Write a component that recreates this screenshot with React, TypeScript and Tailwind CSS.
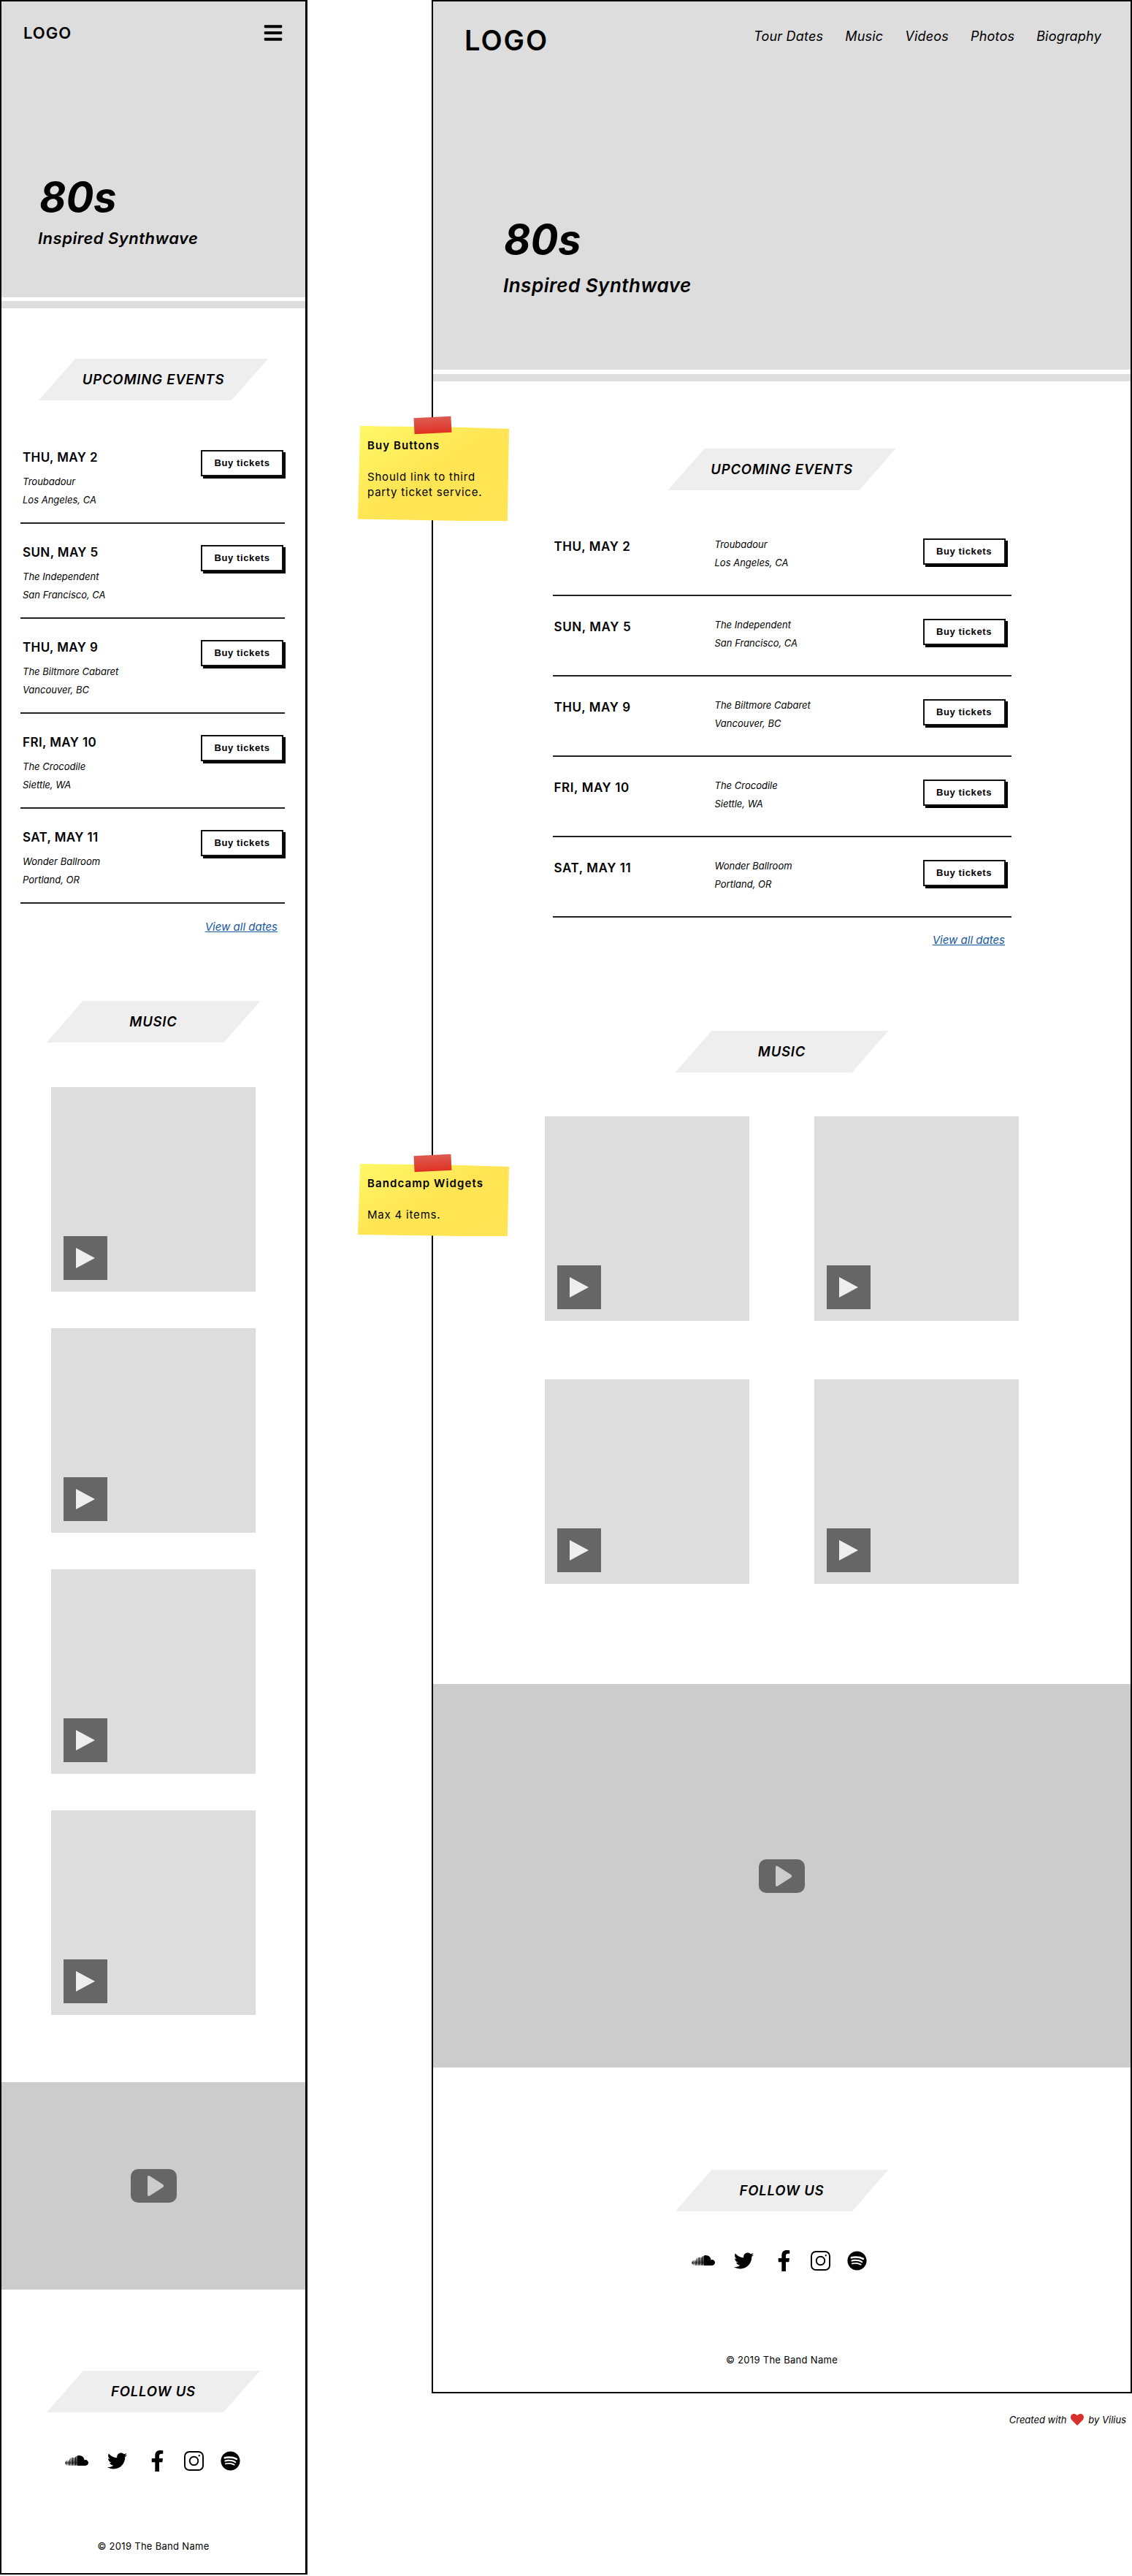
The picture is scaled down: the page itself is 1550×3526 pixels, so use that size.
import { FaBars, FaFacebookF, FaSoundcloud, FaSpotify, FaTwitter } from 'react-icons/fa';

const events = [
    { date: 'THU, MAY 2', venue: 'Troubadour', city: 'Los Angeles, CA' },
    { date: 'SUN, MAY 5', venue: 'The Independent', city: 'San Francisco, CA' },
    { date: 'THU, MAY 9', venue: 'The Biltmore Cabaret', city: 'Vancouver, BC' },
    { date: 'FRI, MAY 10', venue: 'The Crocodile', city: 'Siettle, WA' },
    { date: 'SAT, MAY 11', venue: 'Wonder Ballroom', city: 'Portland, OR' },
];

const SectionTitle = ({ text, className }: { text: string; className: string }) => (
    <div
        className={`mx-auto flex h-[57px] items-center justify-center bg-[#eeeeee] text-[18.500px] font-semibold tracking-[0.8px] text-black italic [clip-path:polygon(50px_0,100%_0,calc(100%_-_50px)_100%,0_100%)] ${className}`}
    >
        {text}
    </div>
);

const BuyButton = () => (
    <button className="flex h-[36px] w-[113px] items-center justify-center border-2 border-[#111111] bg-white font-['Liberation_Sans',sans-serif] text-[13px] font-bold tracking-[0.6px] text-black shadow-[3px_3px_0_#000]">
        Buy tickets
    </button>
);

const Tile = () => (
    <div className="flex h-[280px] w-[280px] items-end bg-[#dddddd] pb-4 pl-[17px]">
        <div className="flex h-[60px] w-[60px] items-center justify-center bg-[#666666]">
            <svg width="26" height="28" viewBox="0 0 26 28">
                <path d="M0 0 L26 14 L0 28 Z" fill="#eeeeee" />
            </svg>
        </div>
    </div>
);

const VideoBand = ({ className }: { className: string }) => (
    <div className={`flex items-center justify-center bg-[#cccccc] ${className}`}>
        <svg width="63" height="46" viewBox="0 0 63 46">
            <rect width="63" height="46" rx="10" fill="#666666" />
            <path
                d="M23 11 Q23 8 26 9.5 L44 21 Q46.500 23 44 25 L26 36.500 Q23 38 23 35 Z"
                fill="#cccccc"
            />
        </svg>
    </div>
);

const Socials = ({ className }: { className: string }) => (
    <div className={`flex h-[30px] items-center justify-center text-black ${className}`}>
        <FaSoundcloud size={32} />
        <FaTwitter size={27} className="ml-[26px]" />
        <FaFacebookF size={29} className="ml-[27px]" />
        <svg
            width="27"
            height="27"
            viewBox="0 0 28 28"
            fill="none"
            stroke="currentColor"
            strokeWidth="2"
            className="ml-[22px]"
        >
            <rect x="1" y="1" width="26" height="26" rx="6.500" />
            <circle cx="14" cy="14" r="6" />
            <circle cx="21.500" cy="6.500" r="1.200" fill="currentColor" stroke="none" />
        </svg>
        <FaSpotify size={27} className="ml-[23px]" />
    </div>
);

const Copyright = ({ className }: { className: string }) => (
    <p className={`text-center text-[13px] leading-5 tracking-[0.3px] text-black ${className}`}>
        © 2019 The Band Name
    </p>
);

const ViewAll = ({ className }: { className: string }) => (
    <a className={`block text-right text-[15px] leading-5 text-[#17599f] italic underline ${className}`}>
        View all dates
    </a>
);

const StickyNote = ({
    title,
    lines,
    className,
}: {
    title: string;
    lines: string[];
    className: string;
}) => (
    <div className={`absolute left-[490px] w-[207px] ${className}`}>
        {/* paper */}
        <div className="h-full bg-linear-to-br from-[#fff968] via-[#ffe453] to-[#ffe555] px-[13px] pt-4 text-[15px] leading-[21px] tracking-[0.8px] text-black [clip-path:polygon(3px_0,70%_2px,100%_4px,99%_100%,70%_100%,0_98%)]">
            <p className="font-semibold tracking-[1.1px]">{title}</p>
            <div className="mt-[22px]">
                {lines.map((line) => (
                    <p key={line}>{line}</p>
                ))}
            </div>
        </div>
        {/* tape */}
        <div className="absolute top-[-12px] left-[77px] h-[22px] w-[51px] -rotate-3 bg-linear-to-b from-[#dd5a50] to-[#e02f20]" />
    </div>
);

const App = () => {
    return (
        <div className="relative flex h-[3526px] w-[1550px] items-start gap-[170px] bg-white font-[Inter,sans-serif] text-black">
            {/* mobile frame */}
            <div className="h-[3524px] w-[421px] shrink-0 border-2 border-r-[3px] border-black">
                <div className="h-[405px] bg-[#dddddd] px-[30px] pt-[29px]">
                    <div className="flex items-center justify-between">
                        <span className="text-[22px] leading-6 font-semibold tracking-[1px]">LOGO</span>
                        <FaBars size={28} />
                    </div>
                    <h1 className="mt-[181px] ml-[22px] text-[56px] leading-[60px] font-bold italic">
                        80s
                    </h1>
                    <p className="mt-[12px] ml-[20px] text-[22px] leading-7 font-semibold tracking-[0.5px] italic">
                        Inspired Synthwave
                    </p>
                </div>
                <div className="mt-[5px] h-[10px] bg-[#dddddd]" />

                <SectionTitle text="UPCOMING EVENTS" className="mt-[69px] w-[314px]" />
                <div className="mt-[39px] pr-[28px] pl-[26px]">
                    {events.map((event) => (
                        <div
                            key={event.date}
                            className="h-[130px] border-b-2 border-[#222222] pt-[29px] pr-[2px]"
                        >
                            <div className="flex items-start justify-between">
                                <p className="pt-[1px] pl-[3px] text-[17px] leading-[18px] font-semibold tracking-[0.4px]">
                                    {event.date}
                                </p>
                                <BuyButton />
                            </div>
                            <div className="mt-[-5px] pl-[3px] text-[13px] leading-[25px] italic">
                                <p>{event.venue}</p>
                                <p>{event.city}</p>
                            </div>
                        </div>
                    ))}
                </div>
                <ViewAll className="mt-[22px] pr-[38px]" />

                <SectionTitle text="MUSIC" className="mt-[91px] w-[293px]" />
                <div className="mt-[61px] flex flex-col items-center gap-[50px]">
                    <Tile />
                    <Tile />
                    <Tile />
                    <Tile />
                </div>

                <VideoBand className="mt-[92px] h-[284px]" />

                <SectionTitle text="FOLLOW US" className="mt-[111px] w-[292px]" />
                <Socials className="mt-[51px] pr-[2px]" />
                <Copyright className="mt-[92px]" />
            </div>

            {/* desktop column */}
            <div className="w-[959px] shrink-0">
                <div className="h-[3276px] border-2 border-black">
                    <div className="h-[504px] bg-[#dddddd] pt-[28px] pr-[40px] pl-[43px]">
                        <div className="flex items-start justify-between">
                            <span className="text-[38px] leading-[50px] font-semibold tracking-[2px]">LOGO</span>
                            <nav className="mt-[8px] flex gap-[30px] text-[18px] leading-6 tracking-[0.2px] italic">
                                <a>Tour Dates</a>
                                <a>Music</a>
                                <a>Videos</a>
                                <a>Photos</a>
                                <a>Biography</a>
                            </nav>
                        </div>
                        <h1 className="mt-[218px] ml-[54px] text-[56px] leading-[60px] font-bold italic">
                            80s
                        </h1>
                        <p className="mt-[17px] ml-[53px] text-[26px] leading-8 font-semibold tracking-[0.5px] italic">
                            Inspired Synthwave
                        </p>
                    </div>
                    <div className="mt-[6px] h-[10px] bg-[#dddddd]" />

                    <SectionTitle text="UPCOMING EVENTS" className="mt-[92px] w-[312px]" />
                    <div className="mx-auto mt-[35px] w-[628px]">
                        {events.map((event) => (
                            <div
                                key={event.date}
                                className="grid h-[110px] grid-cols-[220px_1fr_auto] border-b-2 border-[#222222] pt-[31px] pr-[8px] pl-[2px]"
                            >
                                <p className="pt-[2px] text-[17px] leading-[18px] font-semibold tracking-[0.6px]">
                                    {event.date}
                                </p>
                                <div className="mt-[-4px] text-[13px] leading-[25px] italic">
                                    <p>{event.venue}</p>
                                    <p>{event.city}</p>
                                </div>
                                <BuyButton />
                            </div>
                        ))}
                    </div>
                    <ViewAll className="mt-[21px] pr-[172px]" />

                    <SectionTitle text="MUSIC" className="mt-[114px] w-[292px]" />
                    <div className="mt-[60px] grid grid-cols-[280px_280px] justify-center gap-x-[89px] gap-y-[80px]">
                        <Tile />
                        <Tile />
                        <Tile />
                        <Tile />
                    </div>

                    <VideoBand className="mt-[137px] h-[525px]" />

                    <SectionTitle text="FOLLOW US" className="mt-[140px] w-[292px]" />
                    <Socials className="mt-[52px] pr-[7px]" />
                    <Copyright className="mt-[111px]" />
                </div>
                <p className="mt-[26px] flex items-center justify-end gap-[6px] pr-[8px] text-[13px] leading-5 italic">
                    Created with
                    <svg width="18" height="16" viewBox="0 0 18 16">
                        <path
                            d="M9 16 L1.500 8.500 C-1.500 5 0.500 0 4.500 0 C6.500 0 8 1 9 2.500 C10 1 11.500 0 13.500 0 C17.500 0 19.500 5 16.500 8.500 Z"
                            fill="#d8302a"
                        />
                    </svg>
                    by Vilius
                </p>
            </div>

            <StickyNote
                title="Buy Buttons"
                lines={['Should link to third', 'party ticket service.']}
                className="top-[583px] h-[130px]"
            />
            <StickyNote
                title="Bandcamp Widgets"
                lines={['Max 4 items.']}
                className="top-[1593px] h-[99px]"
            />
        </div>
    );
};

export default App;
